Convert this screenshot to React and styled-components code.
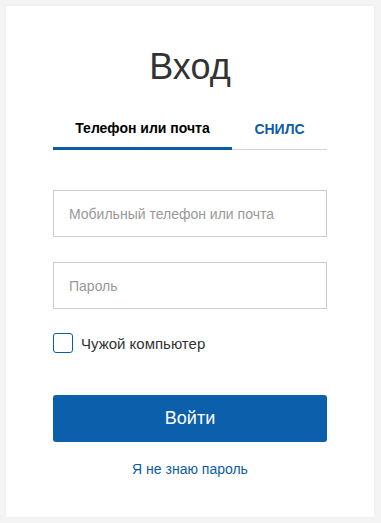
import React, { useState } from "react";
import styled, { createGlobalStyle } from "styled-components";

const GlobalStyle = createGlobalStyle`
  html, body {
    margin: 0;
    padding: 0;
    background: #f4f4f4;
    font-family: "Liberation Sans", Arial, sans-serif;
  }
`;

const Page = styled.div`
  padding: 6px 7px 6px 6px;
  min-height: 523px;
  box-sizing: border-box;
`;

const Card = styled.div`
  background: #fff;
  box-shadow: 0 0 2px rgba(0, 0, 0, 0.06);
  height: 511px;
  box-sizing: border-box;
  padding: 36px 47px 0;
  display: flex;
  flex-direction: column;
`;

const Title = styled.h1`
  margin: 0;
  text-align: center;
  font-size: 36px;
  font-weight: 400;
  color: #333;
  line-height: 50px;
`;

const Tabs = styled.div`
  display: flex;
  margin-top: 28px;
  border-bottom: 1px solid #d5d5d5;
`;

const Tab = styled.button`
  border: none;
  background: none;
  padding: 0 0 10px;
  margin-bottom: ${(p) => (p.$active ? "-1px" : "0")};
  width: ${(p) => p.$width}px;
  font-family: inherit;
  font-size: 14px;
  font-weight: 700;
  color: ${(p) => (p.$active ? "#000" : "#0b5ca8")};
  border-bottom: ${(p) => (p.$active ? "3px solid #0b5ca8" : "none")};
  cursor: pointer;
  line-height: 17px;
`;

const Form = styled.form`
  display: flex;
  flex-direction: column;
  margin-top: 40px;
`;

const Input = styled.input`
  height: 47px;
  box-sizing: border-box;
  border: 1px solid #ccc;
  padding: 0 15px;
  font-family: inherit;
  font-size: 14px;
  color: #333;
  margin-bottom: 25px;
  outline: none;

  &::placeholder {
    color: #999;
  }
`;

const CheckRow = styled.label`
  display: flex;
  align-items: center;
  gap: 8px;
  font-size: 15px;
  color: #333;
  cursor: pointer;
  margin-top: -1px;
`;

const Box = styled.span`
  width: 20px;
  height: 20px;
  box-sizing: border-box;
  border: 1px solid #0b5ca8;
  border-radius: 3px;
  display: flex;
  align-items: center;
  justify-content: center;
`;

const SubmitButton = styled.button`
  margin-top: 42px;
  height: 47px;
  border: none;
  border-radius: 3px;
  background: #0b5fab;
  color: #fff;
  font-family: inherit;
  font-size: 18px;
  cursor: pointer;
`;

const Link = styled.a`
  margin-top: 19px;
  text-align: center;
  font-size: 14px;
  color: #0b5ca8;
  text-decoration: none;
`;

export default function App() {
  const [tab, setTab] = useState("phone");
  const [checked, setChecked] = useState(false);

  return (
    <>
      <GlobalStyle />
      <Page>
        <Card>
          <Title>Вход</Title>
          <Tabs>
            <Tab $width={179} $active={tab === "phone"} onClick={() => setTab("phone")}>
              Телефон или почта
            </Tab>
            <Tab $width={95} $active={tab === "snils"} onClick={() => setTab("snils")}>
              СНИЛС
            </Tab>
          </Tabs>
          <Form onSubmit={(e) => e.preventDefault()}>
            <Input placeholder="Мобильный телефон или почта" />
            <Input type="password" placeholder="Пароль" />
            <CheckRow onClick={() => setChecked(!checked)}>
              <Box>
                {checked && (
                  <svg width="12" height="10" viewBox="0 0 12 10">
                    <path d="M1 5l3.5 3.5L11 1" stroke="#0b5ca8" strokeWidth="2" fill="none" />
                  </svg>
                )}
              </Box>
              Чужой компьютер
            </CheckRow>
            <SubmitButton type="submit">Войти</SubmitButton>
            <Link href="#">Я не знаю пароль</Link>
          </Form>
        </Card>
      </Page>
    </>
  );
}
